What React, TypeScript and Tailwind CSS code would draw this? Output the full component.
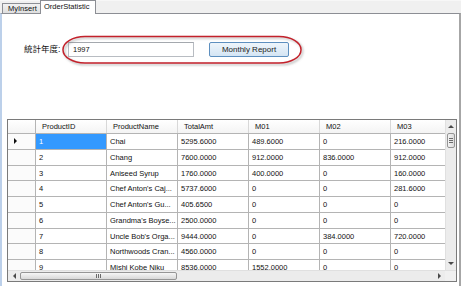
import React from "react";

const rows: string[][] = [
  ["1", "Chai", "5295.6000", "489.6000", "0", "216.0000"],
  ["2", "Chang", "7600.0000", "912.0000", "836.0000", "912.0000"],
  ["3", "Aniseed Syrup", "1760.0000", "400.0000", "0", "160.0000"],
  ["4", "Chef Anton's Caj...", "5737.6000", "0", "0", "281.6000"],
  ["5", "Chef Anton's Gu...", "405.6500", "0", "0", "0"],
  ["6", "Grandma's Boyse...", "2500.0000", "0", "0", "0"],
  ["7", "Uncle Bob's Orga...", "9444.0000", "0", "384.0000", "720.0000"],
  ["8", "Northwoods Cran...", "4560.0000", "0", "0", "0"],
  ["9", "Mishi Kobe Niku", "8536.0000", "1552.0000", "0", "0"],
];

const headers = ["ProductID", "ProductName", "TotalAmt", "M01", "M02", "M03"];

function Tri({ dir }: { dir: "up" | "down" | "left" | "right" }) {
  const pts: Record<string, string> = {
    up: "0,3 3,0 6,3",
    down: "0,0 6,0 3,3",
    left: "3,0 3,6 0,3",
    right: "0,0 0,6 3,3",
  };
  const vert = dir === "up" || dir === "down";
  return (
    <svg width={vert ? 6 : 3} height={vert ? 3 : 6} viewBox={vert ? "0 0 6 3" : "0 0 3 6"}>
      <polygon points={pts[dir]} fill="#4a4a4a" />
    </svg>
  );
}

export default function App() {
  return (
    <div className="relative w-[461px] h-[286px] overflow-hidden bg-[#f0f0f0] font-['Liberation_Sans',Arial,sans-serif] text-[#111]">
      {/* tab strip */}
      <div className="flex h-[13px] items-end pl-[2px] border-t border-t-[#f7f7f7]">
        <div className="h-[10px] w-[39px] border border-b-0 border-[#8c8e94] bg-gradient-to-b from-[#f2f2f2] to-[#dedede] pl-[5px] text-[7.5px] leading-[9px]">
          MyInsert
        </div>
        <div className="relative z-10 -mb-px -ml-px h-[14px] w-[56px] border border-b-0 border-[#8c8e94] bg-white pl-[3px] text-[7.5px] leading-[12px]">
          OrderStatistic
        </div>
      </div>

      {/* tab page */}
      <div className="h-[273px] border-t border-t-[#8c8e94] border-l-2 border-l-[#bcd0ea] border-r-2 border-r-[#a6a6a6] bg-white">
        <div className="flex h-[15px] items-center pl-[22px] mt-[28px]">
          <span className="w-[44px] whitespace-nowrap text-[8.5px] leading-[15px] font-['Liberation_Sans','Noto_Sans_CJK_TC',sans-serif]">
            統計年度:
          </span>
          <div className="h-[15px] w-[126px] border border-[#b8bcc2] border-t-[#a4a8ae] bg-white pl-[4px] text-[7.5px] leading-[13px]">
            1997
          </div>
          <div className="ml-[15px] flex h-[15px] w-[80px] items-center justify-center rounded-[2px] border border-[#5d8fbf] bg-gradient-to-b from-[#eef5fb] to-[#d4e5f4] text-[8px] text-[#222]">
            Monthly Report
          </div>
        </div>

        {/* data grid */}
        <div className="ml-[5px] mt-[62px] h-[163px] w-[450px] border border-[#7a7a7a] bg-white flex flex-col">
          <div className="flex h-[150px]">
            <div className="w-[437px] overflow-hidden">
              {/* header */}
              <div className="grid h-[14px] grid-cols-[28px_71px_71px_71px_71px_71px_71px] border-b border-[#b4b4b4] bg-gradient-to-b from-white to-[#f4f4f4] text-[7.5px] leading-[13px]">
                <div className="border-r border-[#b4b4b4]" />
                {headers.map((h) => (
                  <div key={h} className="border-r border-[#d8d8d8] pl-[6px] whitespace-nowrap">
                    {h}
                  </div>
                ))}
              </div>
              {rows.map((r, i) => (
                <div
                  key={i}
                  className="grid h-[15.75px] grid-cols-[28px_71px_71px_71px_71px_71px_71px] text-[7.5px] leading-[15px]"
                >
                  <div className="flex items-center border-r border-b border-[#b4b4b4] bg-[#fbfbfb] pl-[6px]">
                    {i === 0 && (
                      <svg width="3" height="6" viewBox="0 0 3 6">
                        <polygon points="0,0 0,6 3,3" fill="#111" />
                      </svg>
                    )}
                  </div>
                  {r.map((c, j) => (
                    <div
                      key={j}
                      className={
                        "border-r border-b border-[#b4b4b4] pl-[3px] whitespace-nowrap overflow-hidden " +
                        (i === 0 && j === 0 ? "bg-[#3399ff] text-white" : "")
                      }
                    >
                      {c}
                    </div>
                  ))}
                </div>
              ))}
            </div>
            {/* vertical scrollbar */}
            <div className="flex w-[11px] flex-col bg-[#ececec] border-l border-[#e0e0e0]">
              <div className="flex h-[13px] items-center justify-center">
                <Tri dir="up" />
              </div>
              <div className="mx-[1px] flex h-[15px] items-center justify-center rounded-[2px] border border-[#959595] bg-gradient-to-r from-[#f4f4f4] to-[#dcdcdc]">
                <div className="flex flex-col gap-[1px]">
                  <div className="h-px w-[4px] bg-[#6a6a6a]" />
                  <div className="h-px w-[4px] bg-[#6a6a6a]" />
                  <div className="h-px w-[4px] bg-[#6a6a6a]" />
                </div>
              </div>
              <div className="flex-1" />
              <div className="flex h-[13px] items-center justify-center">
                <Tri dir="down" />
              </div>
            </div>
          </div>
          {/* horizontal scrollbar */}
          <div className="flex h-[11px] border-t border-[#e0e0e0]">
            <div className="flex w-[437px] bg-[#ececec]">
              <div className="flex w-[12px] items-center justify-center">
                <Tri dir="left" />
              </div>
              <div className="my-[1px] flex w-[157px] items-center justify-center rounded-[2px] border border-[#959595] bg-gradient-to-b from-[#f6f6f6] to-[#d8d8d8]">
                <div className="flex gap-[1px]">
                  <div className="h-[4px] w-px bg-[#6a6a6a]" />
                  <div className="h-[4px] w-px bg-[#6a6a6a]" />
                  <div className="h-[4px] w-px bg-[#6a6a6a]" />
                </div>
              </div>
              <div className="flex-1" />
              <div className="flex w-[12px] items-center justify-center">
                <Tri dir="right" />
              </div>
            </div>
            <div className="w-[11px] bg-[#f0f0f0]" />
          </div>
        </div>
      </div>

      {/* red annotation oval */}
      <svg
        className="pointer-events-none absolute left-[58px] top-[32px]"
        width="252"
        height="38"
        viewBox="0 0 252 38"
      >
        <defs>
          <filter id="blur" x="-10%" y="-30%" width="120%" height="160%">
            <feGaussianBlur stdDeviation="1" />
          </filter>
        </defs>
        <rect x="6.5" y="6" width="238" height="26.5" rx="22" ry="13" fill="none" stroke="#808080" strokeOpacity="0.55" strokeWidth="1.6" filter="url(#blur)" />
        <rect x="5" y="4.5" width="238" height="26.5" rx="22" ry="13" fill="none" stroke="#c3212b" strokeWidth="1.5" />
      </svg>
    </div>
  );
}
